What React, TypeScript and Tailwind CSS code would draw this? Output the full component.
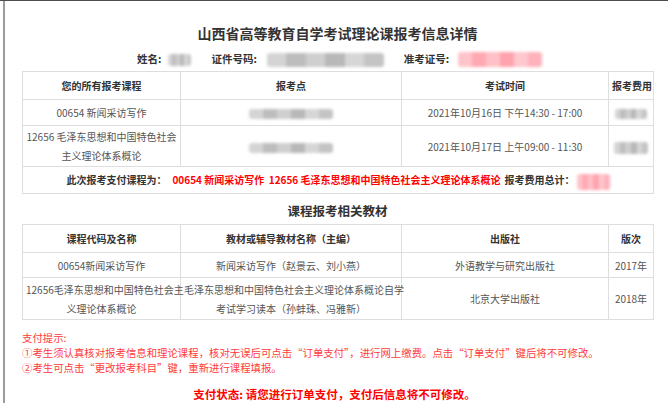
import { FC } from "react";

const FONT = "font-['Noto_Sans_CJK_SC',sans-serif]";

const Mosaic: FC<{ w: string; tone: "gray" | "pink"; h?: string }> = ({ w, tone, h = "h-[14px]" }) => {
  const shades =
    tone === "gray"
      ? ["bg-[#d4d4d4]", "bg-[#bdbdbd]", "bg-[#cfcfcf]", "bg-[#b8b8b8]", "bg-[#d6d6d6]", "bg-[#c4c4c4]"]
      : ["bg-[#ffc4cb]", "bg-[#ffa9b3]", "bg-[#ffc0c7]", "bg-[#ffa3ae]", "bg-[#ffc7ce]", "bg-[#ffb2bb]"];
  return (
    <span className={`inline-flex align-middle ${w} ${h} blur-[1.5px] overflow-hidden rounded-[3px]`}>
      {shades.map((s, i) => (
        <span key={i} className={`flex-1 ${s}`} />
      ))}
    </span>
  );
};

const th = "border border-[#dedede] text-center font-bold text-[#333] text-[10px] px-[3px] whitespace-nowrap";
const td = "border border-[#dedede] text-center text-[#555] text-[10px] px-[3px] leading-[19px]";

export default function App() {
  return (
    <div
      lang="zh-CN"
      className={`w-[668px] h-[403px] overflow-hidden bg-white border-t border-[#4d4d4d] flex ${FONT}`}
    >
      <div className="w-[3px] shrink-0" />
      <div className="w-[2px] shrink-0 bg-[#9c9c9c]" />
      <div className="flex-1 pl-[17px] flex flex-col">
        <div className="mt-[22px] h-[20px] leading-[20px] text-center text-[14px] font-bold text-[#333] w-[631px]">
          山西省高等教育自学考试理论课报考信息详情
        </div>

        <div className="mt-[7px] h-[18px] flex items-center text-[10.5px] font-bold text-[#333] pl-[115px]">
          <span>姓名:</span>
          <span className="ml-[7px]">
            <Mosaic w="w-[23px]" tone="gray" h="h-[12px]" />
          </span>
          <span className="ml-[20px]">证件号码:</span>
          <span className="ml-[10px]">
            <Mosaic w="w-[117px]" tone="gray" />
          </span>
          <span className="ml-[20px]">准考证号:</span>
          <span className="ml-[9px]">
            <Mosaic w="w-[84px]" tone="pink" h="h-[15px]" />
          </span>
        </div>

        <table className="mt-[4px] table-fixed border-collapse w-[631px]">
          <colgroup>
            <col className="w-[158px]" />
            <col className="w-[221px]" />
            <col className="w-[207px]" />
            <col className="w-[45px]" />
          </colgroup>
          <tbody>
            <tr>
              <td className={`${th} h-[28px]`}>您的所有报考课程</td>
              <td className={th}>报考点</td>
              <td className={th}>考试时间</td>
              <td className={`${th} px-0`}>报考费用</td>
            </tr>
            <tr>
              <td className={`${td} h-[26px]`}>00654 新闻采访写作</td>
              <td className={td}>
                <Mosaic w="w-[84px]" tone="gray" h="h-[10px]" />
              </td>
              <td className={td}>2021年10月16日 下午14:30 - 17:00</td>
              <td className={td}>
                <Mosaic w="w-[32px]" tone="gray" h="h-[10px]" />
              </td>
            </tr>
            <tr>
              <td className={`${td} h-[41px]`}>
                12656 毛泽东思想和中国特色社会
                <br />
                主义理论体系概论
              </td>
              <td className={td}>
                <Mosaic w="w-[84px]" tone="gray" h="h-[10px]" />
              </td>
              <td className={td}>2021年10月17日 上午09:00 - 11:30</td>
              <td className={td}>
                <Mosaic w="w-[34px]" tone="gray" h="h-[12px]" />
              </td>
            </tr>
            <tr>
              <td colSpan={4} className={`${td} h-[27px] font-bold whitespace-nowrap`}>
                <span className="text-[#333]">此次报考支付课程为：</span>
                <span className="ml-[6px] text-[#ff0000]">
                  00654 新闻采访写作&nbsp;&nbsp;12656 毛泽东思想和中国特色社会主义理论体系概论
                </span>
                <span className="ml-[4px] text-[#333]">报考费用总计：</span>
                <span className="ml-[2px]">
                  <Mosaic w="w-[33px]" tone="pink" h="h-[16px]" />
                </span>
              </td>
            </tr>
          </tbody>
        </table>

        <div className="mt-[8px] mb-[4px] h-[18px] leading-[18px] text-center text-[12.5px] font-bold text-[#333] w-[631px]">
          课程报考相关教材
        </div>

        <table className="table-fixed border-collapse w-[631px]">
          <colgroup>
            <col className="w-[158px]" />
            <col className="w-[221px]" />
            <col className="w-[207px]" />
            <col className="w-[45px]" />
          </colgroup>
          <tbody>
            <tr>
              <td className={`${th} h-[28px] font-semibold`}>课程代码及名称</td>
              <td className={`${th} font-semibold`}>教材或辅导教材名称（主编）</td>
              <td className={`${th} font-semibold`}>出版社</td>
              <td className={`${th} font-semibold`}>版次</td>
            </tr>
            <tr>
              <td className={`${td} h-[25px]`}>00654新闻采访写作</td>
              <td className={td}>新闻采访写作（赵景云、刘小燕）</td>
              <td className={td}>外语教学与研究出版社</td>
              <td className={`${td} px-0`}>2017年</td>
            </tr>
            <tr>
              <td className={`${td} h-[42px] whitespace-nowrap px-0`}>
                12656毛泽东思想和中国特色社会主
                <br />
                义理论体系概论
              </td>
              <td className={`${td} whitespace-nowrap px-0`}>
                毛泽东思想和中国特色社会主义理论体系概论自学
                <br />
                考试学习读本（孙蚌珠、冯雅新）
              </td>
              <td className={td}>北京大学出版社</td>
              <td className={`${td} px-0`}>2018年</td>
            </tr>
          </tbody>
        </table>

        <div className="mt-[10px] text-[10.4px] leading-[15px] text-[#ff3b3b] whitespace-nowrap">
          <div>支付提示:</div>
          <div>
            ①考生须认真核对报考信息和理论课程，核对无误后可点击“订单支付”，进行网上缴费。点击“订单支付”键后将不可修改。
          </div>
          <div>②考生可点击“更改报考科目”键，重新进行课程填报。</div>
        </div>

        <div className="mt-[10px] h-[18px] leading-[18px] text-center text-[11.5px] font-bold text-[#ff0000] w-[625px]">
          支付状态: 请您进行订单支付，支付后信息将不可修改。
        </div>
      </div>
    </div>
  );
}
